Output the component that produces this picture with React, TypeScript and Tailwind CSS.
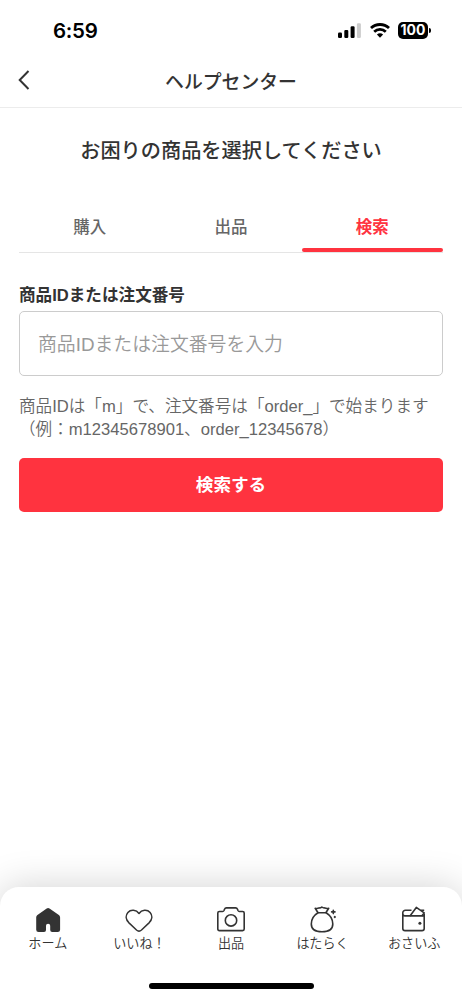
import type { ReactNode } from "react"

const tabs = [
  { label: "購入", active: false },
  { label: "出品", active: false },
  { label: "検索", active: true },
]

function StatusBar() {
  return (
    <div className="flex h-[58px] items-start justify-between pl-[53px] pr-[31px] pt-[19px] text-black">
      <span className="font-['Inter'] text-[20.5px] font-semibold leading-6 tracking-[-0.3px]">
        6:59
      </span>
      <div className="flex items-center">
        <svg width="24" height="22" viewBox="0 0 24 22">
          <rect x="0" y="13.5" width="4" height="5.5" rx="1.2" />
          <rect x="6.3" y="10.9" width="4" height="8.1" rx="1.2" />
          <rect x="12.6" y="7.3" width="4" height="11.7" rx="1.2" />
          <rect x="18.9" y="4.3" width="4" height="14.7" rx="1.2" fill="#cccccc" />
        </svg>
        <svg className="ml-2" width="20" height="22" viewBox="0 0 20 22">
          <g fill="none" stroke="black" strokeWidth="2.8">
            <path d="M1 9C6 4.3 14 4.3 19 9" />
            <path d="M4.2 12.7c3.3-3.1 8.3-3.1 11.6 0" />
          </g>
          <path d="M6.9 15.5c1.8-1.6 4.4-1.6 6.2 0L10 18.8z" />
        </svg>
        <div className="ml-2 flex h-[17px] w-[30px] items-center justify-center rounded-[5px] bg-black font-['Inter'] text-[14px] font-bold leading-none text-white">
          100
        </div>
        <div className="ml-px h-[5px] w-[2px] rounded-r-full bg-black" />
      </div>
    </div>
  )
}

function HomeIcon() {
  return (
    <svg width="28" height="28" viewBox="0 0 28 28" fill="#333333">
      <path d="M12.7 2.6a2.4 2.4 0 0 1 2.8 0l9 6.1c1 .7 1.6 1.7 1.6 2.9v12.1a2.4 2.4 0 0 1-2.4 2.4h-5.5a2 2 0 0 1-2-2v-4.3a2.1 2.1 0 0 0-4.2 0v4.3a2 2 0 0 1-2 2H4.6a2.4 2.4 0 0 1-2.4-2.4V11.6c0-1.2.6-2.2 1.6-2.9z" />
    </svg>
  )
}

function HeartIcon() {
  return (
    <svg width="28" height="28" viewBox="0 0 28 28" fill="none" stroke="#333333" strokeWidth="1.5">
      <path d="M14 7.5C11.2 3.6 5.8 3.2 2.9 6.5c-2.7 3.2-2 7.2.8 10.1l7.8 7.4c1.7 1.5 3.3 1.5 5 0l7.8-7.4c2.8-2.9 3.5-6.9.8-10.1C22.2 3.2 16.8 3.6 14 7.5z" strokeLinejoin="round" />
    </svg>
  )
}

function CameraIcon() {
  return (
    <svg width="28" height="28" viewBox="0 0 28 28" fill="none" stroke="#333333" strokeWidth="1.6" strokeLinejoin="round">
      <path d="M2.4 5.5h3.2c.8 0 1.1-.3 1.4-1l.5-1.3c.4-.9 1-1.3 1.9-1.3h9.2c.9 0 1.5.4 1.9 1.3l.5 1.3c.3.7.6 1 1.4 1h3.2c1 0 1.6.6 1.6 1.6V23c0 1-.6 1.6-1.6 1.6H2.4c-1 0-1.600-.6-1.600-1.600V7.1c0-1 .6-1.600 1.600-1.600z" />
      <circle cx="14" cy="14.400" r="5.7" />
    </svg>
  )
}

function MoneyBagIcon() {
  return (
    <svg width="28" height="28" viewBox="0 -0.4 28 28" fill="none" stroke="#333333" strokeWidth="1.6" strokeLinecap="round" strokeLinejoin="round">
      <path d="M9 6.3 6.2 1.9c1.7.4 2.7.3 3.9-.4 1 .2 1.8 0 2.7-.9 1 .9 1.8 1.1 2.9.9 1.2.7 2.3.8 4 .4l-2.800 4.400z" />
      <path d="M9 6.3C5.2 8.6 2.3 13.2 2.3 17.6c0 5.6 4.3 7.8 10.7 7.8s10.8-2.2 10.8-7.8c0-4.400-2.900-9-6.700-11.300" />
      <path d="M24.300 3.8v3.4M22.600 5.5H26M25.800 10.200v.8M25.400 10.600h.8" />
    </svg>
  )
}

function WalletIcon() {
  return (
    <svg width="28" height="28" viewBox="0 -0.2 28 28" fill="none" stroke="#333333" strokeWidth="1.6" strokeLinejoin="round">
      <path d="M11.5 4H5.4A2.6 2.6 0 0 0 2.8 6.6v15.6A2.2 2.2 0 0 0 5 24.4h17a2.2 2.2 0 0 0 2.2-2.2V9.7H5A2.2 2.2 0 0 1 2.8 7.5M24.2 9.7V7.5" />
      <path d="M10 9.7 16.3 1.2 24.2 6.7 21.7 9.7M19.7 4h4.5" />
      <circle cx="19.9" cy="17" r="1.5" fill="#333333" stroke="none" />
    </svg>
  )
}

function NavItem({ icon, label }: { icon: ReactNode; label: string }) {
  return (
    <a className="flex flex-1 flex-col items-center">
      {icon}
      <span className="whitespace-nowrap text-[13.1px] font-[350] leading-5 text-[#333333]">{label}</span>
    </a>
  )
}

export default function App() {
  return (
    <div className="flex h-[999px] w-[462px] flex-col overflow-hidden bg-white font-['Liberation_Sans','Noto_Sans_CJK_JP',sans-serif] text-[#333333]">
      <StatusBar />

      <header className="grid h-[50px] grid-cols-[40px_1fr_40px] items-center border-b border-[#ececec]">
        <svg className="mb-[5px] ml-[17px]" width="14" height="22" viewBox="0 0 14 22" fill="none" stroke="#333333" strokeWidth="2">
          <path d="M11.5 2 2.7 11l8.8 9" />
        </svg>
        <h1 className="pt-px text-center text-[18.85px] font-medium leading-7">ヘルプセンター</h1>
      </header>

      <main className="flex-1 px-[19px]">
        <h2 className="pt-[28px] text-center text-[20.2px] font-medium leading-[30px]">
          お困りの商品を選択してください
        </h2>

        <div className="mt-[34px] flex h-[53px] border-b border-[#e5e5e5]">
          {tabs.map((tab) => (
            <button
              key={tab.label}
              className={
                tab.active
                  ? "flex h-[52px] flex-1 flex-col items-center justify-between text-[16.5px] font-bold text-[#ff333f]"
                  : "flex h-[52px] flex-1 flex-col items-center justify-between text-[16.5px] font-medium text-[#666666]"
              }
            >
              <span className="pt-[15px] leading-6">{tab.label}</span>
              {tab.active && <span className="h-1 w-full rounded-full bg-[#ff333f]" />}
            </button>
          ))}
        </div>

        <label className="mt-[30px] block text-[16.6px] font-bold leading-[25px]">
          商品IDまたは注文番号
        </label>
        <div className="mt-[3px] flex h-[65px] items-center rounded-[5px] border border-[#cccccc] pl-[18px] pt-[3px] text-[18.85px] font-[350] text-[#999999]">
          商品IDまたは注文番号を入力
        </div>
        <p className="mt-[19px] whitespace-nowrap text-[16.6px] font-[350] leading-[23px] text-[#666666]">
          商品IDは「m」で、注文番号は「order_」で始まります
          <br />
          （例：m12345678901、order_12345678）
        </p>
        <button className="mt-[17px] flex h-[54px] w-full items-center justify-center rounded-[5px] bg-[#ff333f] pt-px text-[17.6px] font-bold text-white">
          検索する
        </button>
      </main>

      <nav className="h-[112px] rounded-t-[19px] bg-white px-0.5 shadow-[0_0_38px_rgba(0,0,0,0.18)]">
        <div className="flex pt-[19px]">
          <NavItem icon={<HomeIcon />} label="ホーム" />
          <NavItem icon={<HeartIcon />} label="いいね！" />
          <NavItem icon={<CameraIcon />} label="出品" />
          <NavItem icon={<MoneyBagIcon />} label="はたらく" />
          <NavItem icon={<WalletIcon />} label="おさいふ" />
        </div>
        <div className="mx-auto mt-[29px] h-1.5 w-[165px] rounded-full bg-black" />
      </nav>
    </div>
  )
}
